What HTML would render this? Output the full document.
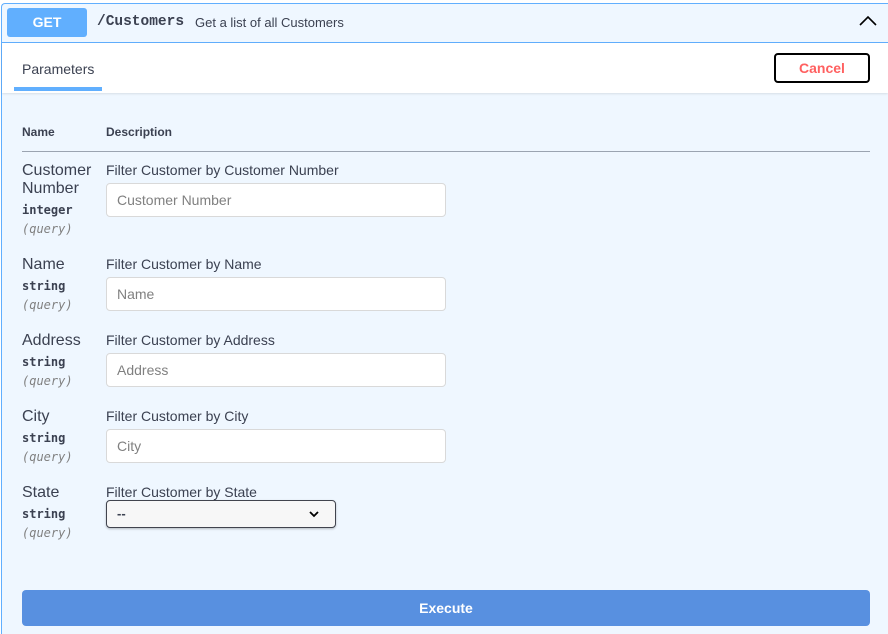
<!DOCTYPE html>
<html><head><style>
html,body{margin:0;width:888px;height:634px;overflow:hidden}
body{background:#fff;font-family:"Liberation Sans",sans-serif;color:#3b4151;position:relative}
.a{position:absolute}
.box{left:1px;top:3px;width:887px;height:631px;border:1px solid #61affe;border-right:none;border-bottom:none;border-radius:4px 0 0 0;background:#eff7ff;box-sizing:border-box}
.mono{font-family:"Liberation Mono","DejaVu Sans Mono",monospace}
.inp{left:106px;width:340px;height:34px;border:1px solid #d9d9d9;border-radius:4px;background:#fff;box-sizing:border-box;font-size:14px;color:#808080;padding-left:10px;line-height:32px}
.lbl{left:22px;font-size:16px;line-height:18px}
.typ{left:22px;font-size:12px;font-weight:bold;font-family:"DejaVu Sans Mono",monospace;color:#3b4151}
.q{left:22px;font-size:12px;font-style:italic;font-family:"DejaVu Sans Mono",monospace;color:#808080}
.d{left:106px;font-size:14px;line-height:16px}
</style></head><body>
<div class="a box"></div>
<div class="a" style="left:2px;top:42px;width:886px;height:1px;background:#61affe"></div>
<div class="a" style="left:7px;top:8px;width:80px;height:29px;background:#61affe;border-radius:3px;color:#fff;font-weight:bold;font-size:14px;text-align:center;line-height:29px">GET</div>
<div class="a mono" style="left:97px;top:14px;font-size:14.5px;font-weight:bold;color:#3b4151">/Customers</div>
<div class="a" style="left:195px;top:15px;font-size:13px">Get a list of all Customers</div>
<svg class="a" style="left:858px;top:14px" width="20" height="14"><path d="M2 11 L10 3 L18 11" fill="none" stroke="#000" stroke-width="1.6"/></svg>
<div class="a" style="left:2px;top:43px;width:886px;height:50px;background:#fff;box-shadow:0 1px 2px rgba(0,0,0,.1)"></div>
<div class="a" style="left:22px;top:61px;font-size:14px">Parameters</div>
<div class="a" style="left:14px;top:87px;width:88px;height:4px;background:#61affe"></div>
<div class="a" style="left:774px;top:53px;width:96px;height:30px;border:2px solid #000;border-radius:4px;box-sizing:border-box;color:#ff6060;font-weight:bold;font-size:14px;text-align:center;line-height:26px">Cancel</div>
<div class="a" style="left:22px;top:125px;font-size:12px;font-weight:bold">Name</div>
<div class="a" style="left:106px;top:125px;font-size:12px;font-weight:bold">Description</div>
<div class="a" style="left:22px;top:151px;width:848px;height:1px;background:#9ba4b1"></div>

<div class="a lbl" style="top:162px">Customer<br>Number</div>
<div class="a typ" style="top:203px">integer</div>
<div class="a q" style="top:222px">(query)</div>
<div class="a d" style="top:162px">Filter Customer by Customer Number</div>
<div class="a inp" style="top:183px">Customer Number</div>

<div class="a lbl" style="top:256px">Name</div>
<div class="a typ" style="top:279px">string</div>
<div class="a q" style="top:298px">(query)</div>
<div class="a d" style="top:256px">Filter Customer by Name</div>
<div class="a inp" style="top:277px">Name</div>

<div class="a lbl" style="top:332px">Address</div>
<div class="a typ" style="top:355px">string</div>
<div class="a q" style="top:374px">(query)</div>
<div class="a d" style="top:332px">Filter Customer by Address</div>
<div class="a inp" style="top:353px">Address</div>

<div class="a lbl" style="top:408px">City</div>
<div class="a typ" style="top:431px">string</div>
<div class="a q" style="top:450px">(query)</div>
<div class="a d" style="top:408px">Filter Customer by City</div>
<div class="a inp" style="top:429px">City</div>

<div class="a lbl" style="top:484px">State</div>
<div class="a typ" style="top:507px">string</div>
<div class="a q" style="top:526px">(query)</div>
<div class="a d" style="top:484px">Filter Customer by State</div>
<div class="a" style="left:106px;top:500px;width:230px;height:28px;border:1px solid #41444e;border-radius:4px;box-sizing:border-box;background:#f7f7f7;box-shadow:0 1px 2px rgba(0,0,0,.25);font-weight:bold;font-size:13px;padding-left:10px;line-height:26px">--</div>
<svg class="a" style="left:308px;top:509px" width="12" height="10"><path d="M2 3 L6 7 L10 3" fill="none" stroke="#000" stroke-width="1.8"/></svg>

<div class="a" style="left:22px;top:590px;width:848px;height:36px;background:#5890e0;border-radius:4px;color:#fff;font-weight:bold;font-size:14px;text-align:center;line-height:36px">Execute</div>
</body></html>
